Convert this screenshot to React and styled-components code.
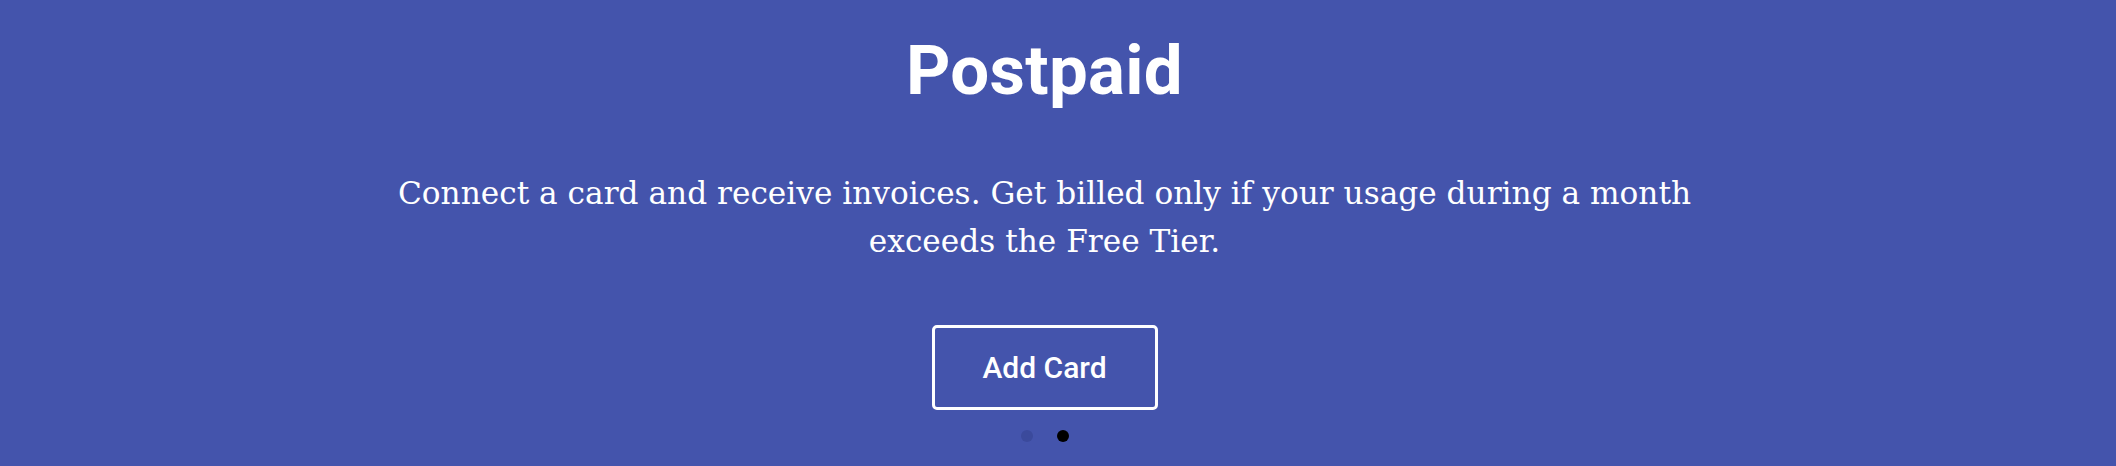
import React, { useState } from "react";
import styled, { createGlobalStyle } from "styled-components";

const GlobalStyle = createGlobalStyle`
  html, body {
    margin: 0;
    padding: 0;
    background: #4454ac;
  }
  * { box-sizing: border-box; }
`;

const Slide = styled.section`
  min-height: 100vh;
  background: #4454ac;
  color: #ffffff;
  display: flex;
  flex-direction: column;
  align-items: center;
  padding: 31px 27px 0 0;
`;

const Title = styled.h1`
  margin: 0;
  font-family: Roboto, "Liberation Sans", sans-serif;
  font-weight: 700;
  font-size: 69px;
  line-height: 80px;
  letter-spacing: 0.3px;
`;

const Lead = styled.p`
  margin: 58px 0 0;
  max-width: 1360px;
  text-align: center;
  font-family: "DejaVu Serif", "Liberation Serif", serif;
  font-weight: 400;
  font-size: 31.2px;
  line-height: 48px;
`;

const OutlineButton = styled.button`
  margin-top: 60px;
  width: 226px;
  height: 85px;
  border: 3px solid #ffffff;
  border-radius: 5px;
  background: transparent;
  color: #ffffff;
  font-family: Roboto, "Liberation Sans", sans-serif;
  font-weight: 500;
  font-size: 30px;
  cursor: pointer;
`;

const Dots = styled.div`
  margin-top: 20px;
  display: flex;
  gap: 24px;
`;

const Dot = styled.span`
  width: 12px;
  height: 12px;
  border-radius: 50%;
  background: ${(p) => (p.$active ? "#000000" : "#3b4a9c")};
`;

export default function App() {
  const [active] = useState(1);
  return (
    <>
      <GlobalStyle />
      <Slide>
        <Title>Postpaid</Title>
        <Lead>
          Connect a card and receive invoices. Get billed only if your usage
          during a month exceeds the Free Tier.
        </Lead>
        <OutlineButton>Add Card</OutlineButton>
        <Dots>
          {[0, 1].map((i) => (
            <Dot key={i} $active={i === active} />
          ))}
        </Dots>
      </Slide>
    </>
  );
}
